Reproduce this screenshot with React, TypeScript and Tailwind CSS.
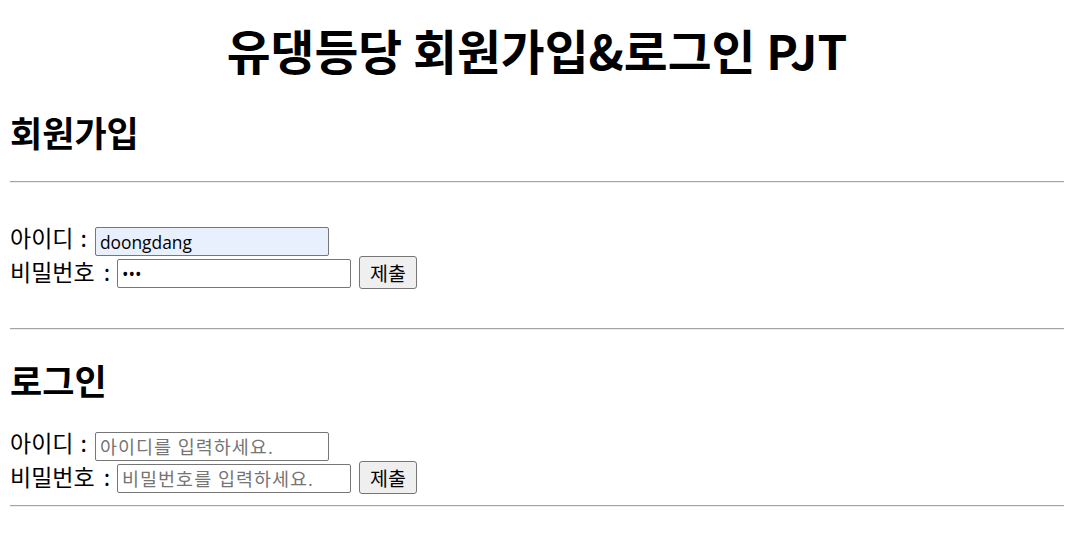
import React from "react";

const KR = "font-['Noto_Sans_CJK_KR',sans-serif]";

function Row({
  label,
  colonMl,
  inputMl,
  value,
  placeholder,
  type,
  autofill,
  button,
  top,
}: {
  label: string;
  colonMl: string;
  inputMl: string;
  value?: string;
  placeholder?: string;
  type: string;
  autofill?: boolean;
  button?: boolean;
  top: string;
}) {
  return (
    <div className={`flex items-start ${top}`}>
      <div className={`flex text-[23px] text-black ${button ? "leading-[31px]" : "leading-[21px]"}`}>
        <span>{label}</span>
        <span className={colonMl}>:</span>
      </div>
      <input
        type={type}
        defaultValue={value}
        placeholder={placeholder}
        readOnly
        className={`${inputMl} ${button ? "mt-[3px]" : ""} w-[234px] h-[29px] border border-[#767676] rounded-[2px] px-[4px] text-[17.4px] text-black placeholder:text-[18.5px] placeholder:tracking-[1px] placeholder:text-[#757575] font-['Open_Sans','Noto_Sans_CJK_KR',sans-serif] outline-none ${
          autofill ? "bg-[#e8f0fe]" : "bg-white"
        }`}
      />
      {button && (
        <button className="ml-[8px] w-[58px] h-[33px] border border-[#767676] rounded-[3px] bg-[#efefef] text-[19.5px] text-black leading-none flex items-center justify-center">
          제출
        </button>
      )}
    </div>
  );
}

function Hr({ mt }: { mt: string }) {
  return <div className={`${mt} h-[2px] border-t border-t-[#a3a3a3] border-b border-b-[#eeeeee]`} />;
}

export default function App() {
  return (
    <div className={`${KR} bg-white w-[1066px] h-[547px] overflow-hidden`}>
      <div className="pl-[10px] w-[1064px] flex flex-col">
        <h1 className="mt-[25px] h-[50px] leading-[50px] text-[47.7px] font-bold text-center text-black">
          유댕등당 회원가입&amp;로그인 PJT
        </h1>
        <h2 className="mt-[37px] h-[40px] leading-[40px] text-[35px] font-bold text-black">회원가입</h2>
        <Hr mt="mt-[29px]" />
        <Row label="아이디" colonMl="ml-[7px]" inputMl="ml-[8px]" type="text" value="doongdang" autofill top="mt-[44px]" />
        <Row label="비밀번호" colonMl="ml-[9px]" inputMl="ml-[7px]" type="password" value="abc" button top="mt-0" />
        <Hr mt="mt-[39px]" />
        <h2 className="mt-[30px] h-[40px] leading-[40px] text-[35px] font-bold text-black">로그인</h2>
        <Row label="아이디" colonMl="ml-[7px]" inputMl="ml-[8px]" type="text" placeholder="아이디를 입력하세요." top="mt-[32px]" />
        <Row
          label="비밀번호"
          colonMl="ml-[9px]"
          inputMl="ml-[7px]"
          type="password"
          placeholder="비밀번호를 입력하세요."
          button
          top="mt-0"
        />
        <Hr mt="mt-[11px]" />
      </div>
    </div>
  );
}
